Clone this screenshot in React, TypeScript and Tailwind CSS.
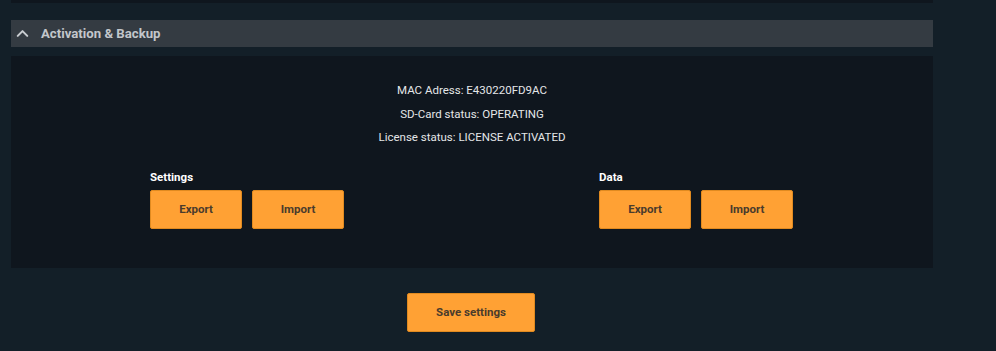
import { ChevronUp } from 'lucide-react';

const btn =
  'w-[92px] h-[39px] rounded-[2px] bg-[#ffa134] text-[#4a3b2c] text-[11.5px] font-bold border border-[#e08a20] pt-[1px]';

function Group({ title }: { title: string }) {
  return (
    <div>
      <div className="text-[11.5px] font-bold text-white leading-none mb-[6px]">{title}</div>
      <div className="flex gap-[10px]">
        <button className={btn}>Export</button>
        <button className={btn}>Import</button>
      </div>
    </div>
  );
}

export default function App() {
  return (
    <div className="w-[996px] h-[351px] bg-[#131f28] font-['Roboto',sans-serif] overflow-hidden">
      <div className="w-[922px] ml-[11px]">
        {/* bottom of previous panel */}
        <div className="h-[3px] bg-[#0f161e]" />

        {/* header */}
        <div className="mt-[17px] h-[27px] bg-[#343b42] flex items-center">
          <ChevronUp className="ml-[2px] w-[19px] h-[19px] text-[#c9cdd1]" strokeWidth={2.6} />
          <span className="ml-[9px] text-[13.2px] font-bold text-[#c3c7cb]">Activation &amp; Backup</span>
        </div>

        {/* body */}
        <div className="mt-[9px] h-[212px] bg-[#0f161e] pt-[27px]">
          <div className="flex flex-col items-center gap-[9.5px] text-[11.5px] text-[#e4e6e8] leading-[14px]">
            <div>MAC Adress: E430220FD9AC</div>
            <div>SD-Card status: OPERATING</div>
            <div>License status: LICENSE ACTIVATED</div>
          </div>
          <div className="flex pl-[139px] gap-[255px] mt-[28px]">
            <Group title="Settings" />
            <Group title="Data" />
          </div>
        </div>

        <div className="flex justify-center mt-[25px] pr-[2px]">
          <button className="w-[128px] h-[39px] rounded-[2px] bg-[#ffa134] text-[#4a3b2c] text-[11.5px] font-bold border border-[#e08a20]">
            Save settings
          </button>
        </div>
      </div>
    </div>
  );
}
